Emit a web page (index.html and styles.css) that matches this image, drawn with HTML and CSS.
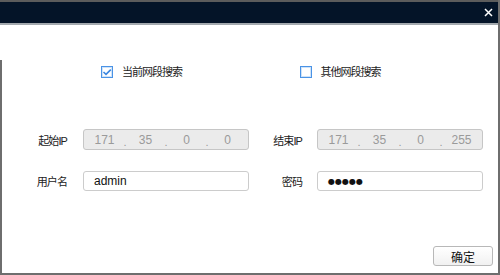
FILE: index.html
```html
<!DOCTYPE html>
<html lang="zh-CN">
<head>
<meta charset="utf-8">
<title>搜索设备</title>
<link rel="stylesheet" href="styles.css">
</head>
<body>
<div class="window">
  <div class="titlebar">
    <button class="close" aria-label="关闭">
      <svg width="9" height="9" viewBox="0 0 9 9"><path d="M1 1 L8 8 M8 1 L1 8" stroke="#ffffff" stroke-width="1.5" fill="none"/></svg>
    </button>
  </div>
  <div class="spacer"></div>
  <div class="main">
    <div class="mode-row">
      <label class="mode">
        <span class="box checked">
          <svg width="10" height="10" viewBox="0 0 10 10"><path d="M1.5 5 L4 7.3 L8.8 2.6" stroke="#3b87e0" stroke-width="1.6" fill="none"/></svg>
        </span>
        <span class="mode-text">当前网段搜索</span>
      </label>
      <label class="mode">
        <span class="box"></span>
        <span class="mode-text">其他网段搜索</span>
      </label>
    </div>

    <div class="form-row ip-row">
      <div class="field left">
        <span class="label">起始IP</span>
        <div class="ip">
          <span class="seg">171</span><span class="dot">.</span>
          <span class="seg">35</span><span class="dot">.</span>
          <span class="seg">0</span><span class="dot">.</span>
          <span class="seg">0</span>
        </div>
      </div>
      <div class="field right">
        <span class="label">结束IP</span>
        <div class="ip">
          <span class="seg">171</span><span class="dot">.</span>
          <span class="seg">35</span><span class="dot">.</span>
          <span class="seg">0</span><span class="dot">.</span>
          <span class="seg">255</span>
        </div>
      </div>
    </div>

    <div class="form-row user-row">
      <div class="field left">
        <span class="label">用户名</span>
        <div class="text-input">admin</div>
      </div>
      <div class="field right">
        <span class="label">密码</span>
        <div class="text-input pwd">●●●●●</div>
      </div>
    </div>

    <div class="actions">
      <button class="ok">确定</button>
    </div>
  </div>
</div>
</body>
</html>
```
FILE: styles.css
```css
html, body {
  margin: 0;
  padding: 0;
  background: #ffffff;
}
.window {
  width: 500px;
  height: 275px;
  box-sizing: border-box;
  border-right: 2px solid #6e6e6e;
  border-bottom: 2px solid #6e6e6e;
  display: flex;
  flex-direction: column;
  font-family: "Liberation Sans", "Noto Sans CJK SC", sans-serif;
  color: #222222;
}
.titlebar {
  height: 21px;
  border-top: 2px solid #5c5c5c;
  border-bottom: 2px solid #a3a9ae;
  background: #041428;
  display: flex;
  justify-content: flex-end;
  align-items: center;
}
.close {
  border: 0;
  background: none;
  padding: 0;
  margin-right: 5px;
  width: 9px;
  height: 9px;
  display: flex;
}
.spacer {
  height: 35px;
}
.main {
  flex: 1;
  border-left: 2px solid #6e6e6e;
  display: flex;
  flex-direction: column;
}
.mode-row {
  display: flex;
  padding-left: 99px;
  margin-top: 6px;
  height: 12px;
}
.mode {
  width: 200px;
  display: flex;
  align-items: center;
}
.box {
  width: 10px;
  height: 10px;
  border: 1px solid #4a93e6;
  box-shadow: inset 0 0 0 1px #cfe3f8;
  display: flex;
  align-items: center;
  justify-content: center;
  flex: none;
}
.mode-text {
  margin-left: 9px;
  font-size: 11px;
  letter-spacing: -1px;
  line-height: 12px;
}
.form-row {
  display: flex;
}
.ip-row {
  margin-top: 51px;
  height: 21px;
}
.user-row {
  margin-top: 21px;
  height: 20px;
}
.field {
  display: flex;
  align-items: center;
}
.label {
  font-size: 11px;
  letter-spacing: -0.9px;
  text-align: right;
  white-space: nowrap;
}
.left .label {
  width: 65px;
  margin-right: 16px;
}
.right .label {
  width: 53px;
  margin-right: 15px;
}
.ip, .text-input {
  width: 166px;
  height: 100%;
  box-sizing: border-box;
  border-radius: 3px;
  display: flex;
  align-items: center;
  font-size: 12px;
}
.ip {
  background: #ebebeb;
  border: 1px solid #c6c6c6;
  color: #9a9a9a;
}
.seg {
  flex: 1;
  text-align: center;
}
.dot {
  width: 0;
  display: flex;
  justify-content: center;
  font-size: 11px;
  position: relative;
  top: 2px;
}
.text-input {
  background: #ffffff;
  border: 1px solid #cccccc;
  padding-left: 10px;
  color: #111111;
}
.pwd {
  font-family: "DejaVu Sans", sans-serif;
  font-size: 8px;
  letter-spacing: 0px;
}
.actions {
  margin-top: auto;
  display: flex;
  justify-content: flex-end;
  padding-right: 5px;
  padding-bottom: 7px;
}
.ok {
  width: 60px;
  height: 20px;
  border: 1px solid #b8b8b8;
  border-radius: 3px;
  background: linear-gradient(#ffffff, #f1f1f1);
  font-family: "Liberation Sans", "Noto Sans CJK SC", sans-serif;
  font-size: 12px;
  color: #111111;
  padding: 0;
}
```
